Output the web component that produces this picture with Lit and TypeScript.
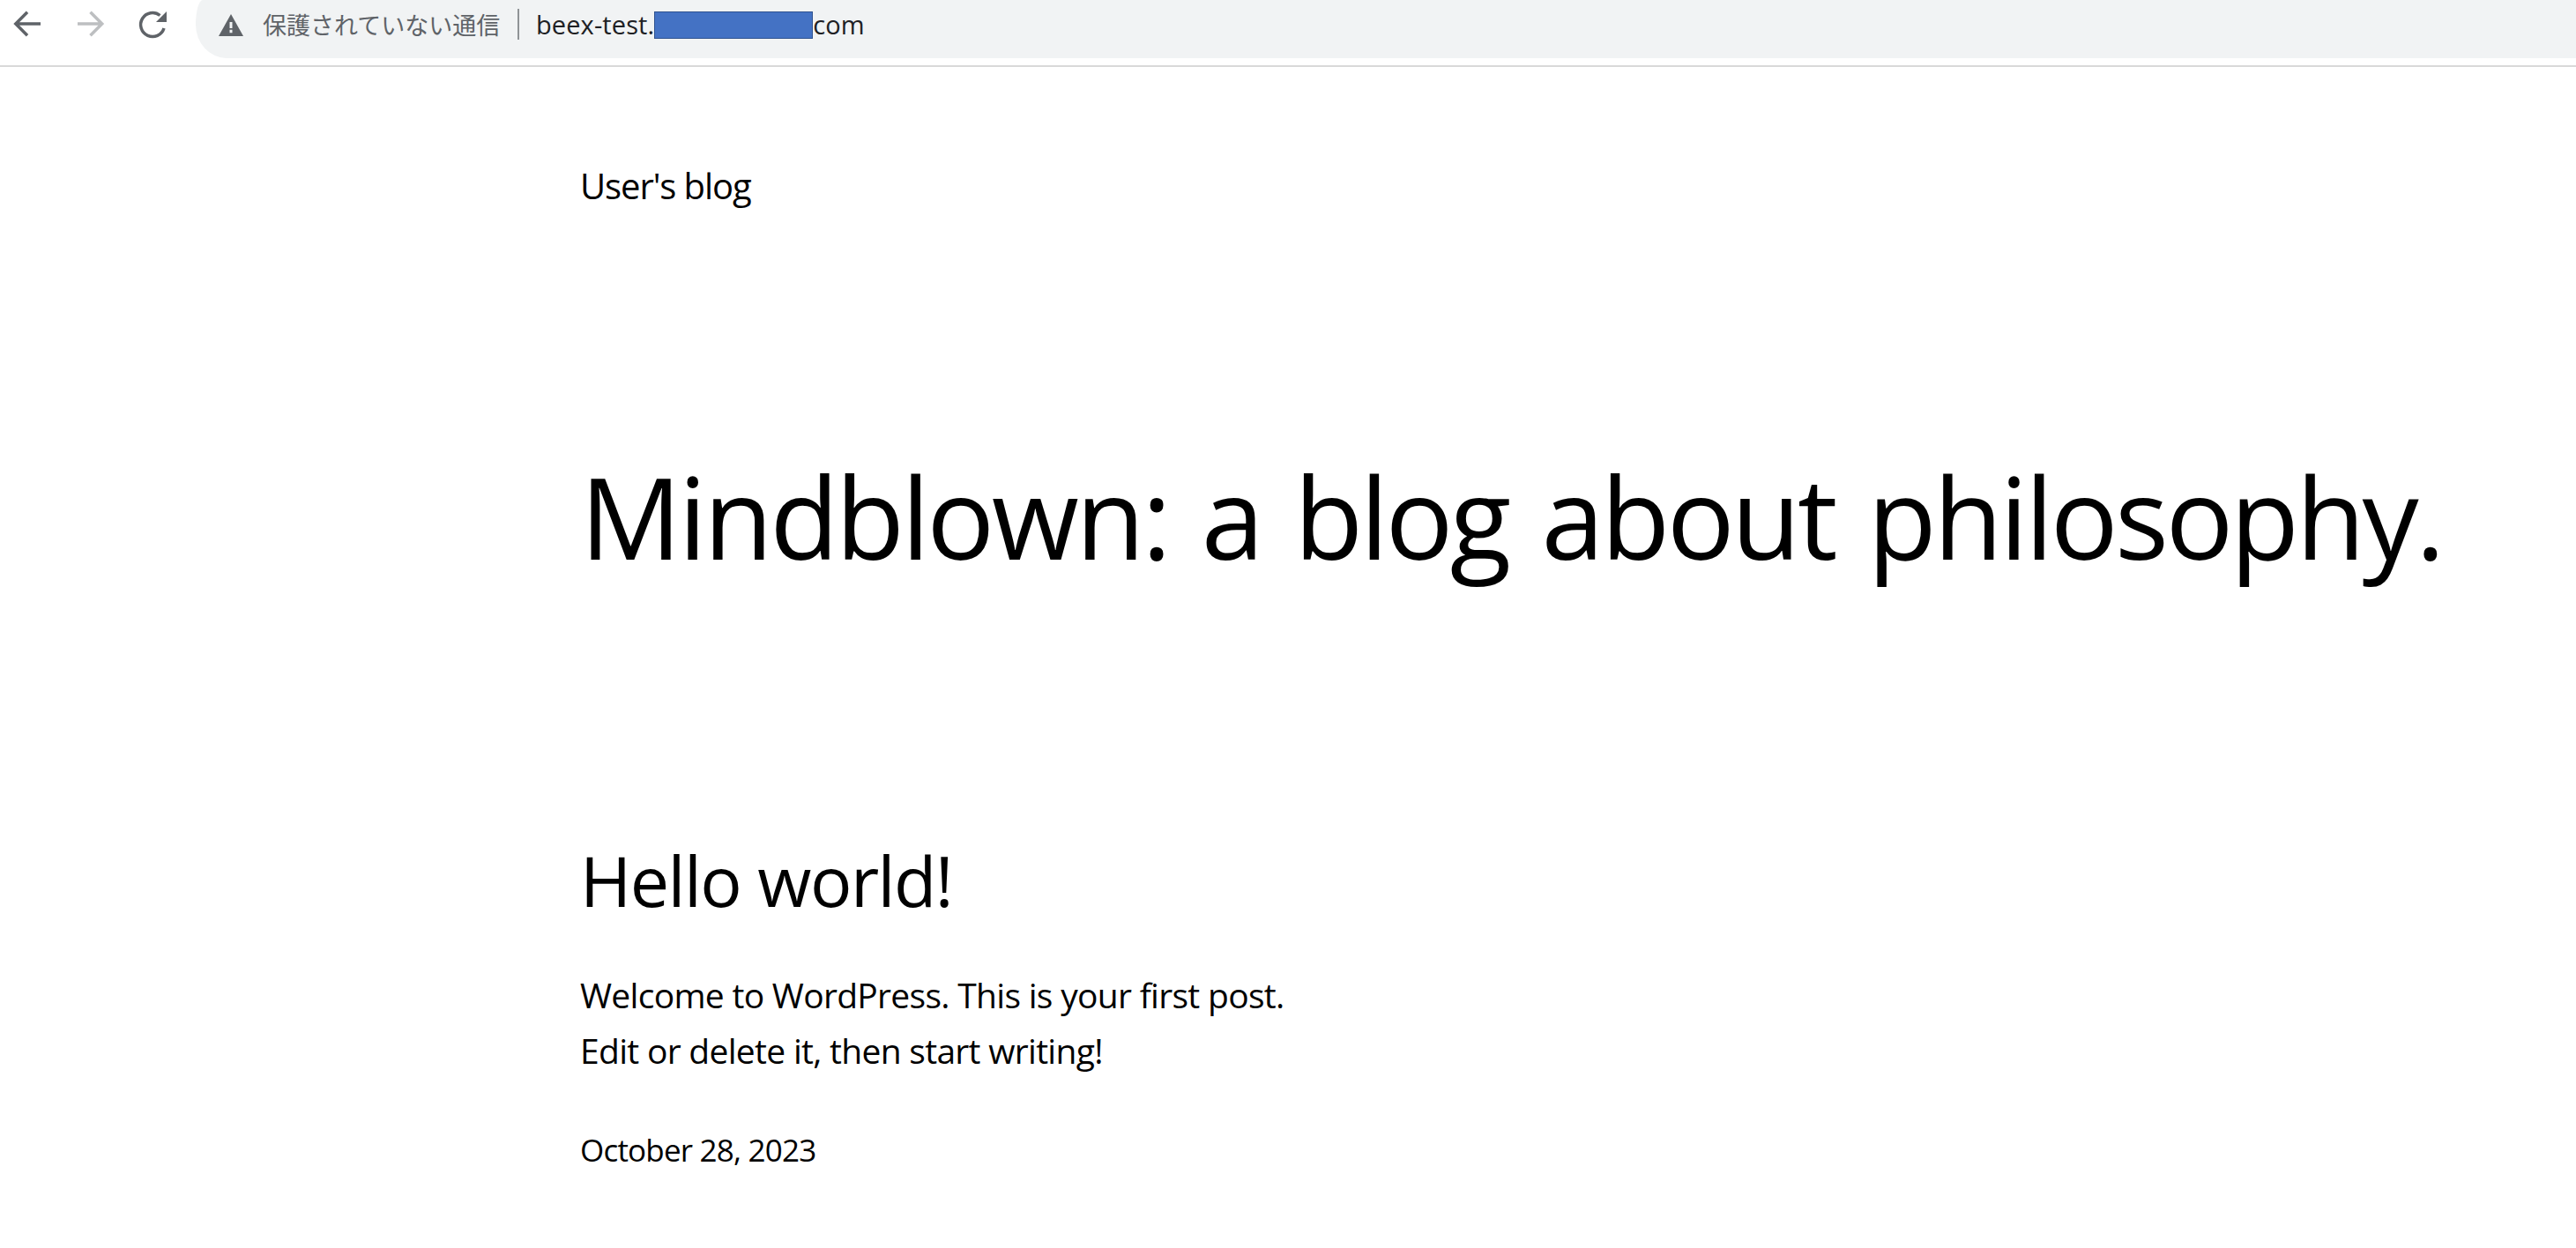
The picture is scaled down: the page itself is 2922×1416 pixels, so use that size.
import { LitElement, html, css } from "lit";
import { customElement } from "lit/decorators.js";

@customElement("app-root")
export class AppRoot extends LitElement {
  static styles = css`
    :host { display: block; background: #fff; min-height: 1416px; color: #000; font-family: "Open Sans", "Noto Sans", sans-serif; overflow: hidden; }
    .chrome { height: 74px; border-bottom: 2px solid #d9d9d9; display: flex; align-items: flex-start; }
    .nav { display: flex; width: 222px; flex: none; padding: 9px 0 0 13px; box-sizing: border-box; gap: 35px; }
    .nav svg { display: block; flex: none; }
    .omni { flex: 1; height: 66px; background: #f1f3f4; border-radius: 8px 0 0 35px / 28px 0 0 38px; display: flex; align-items: flex-start; }
    .warn { margin: 15px 0 0 25px; flex: none; }
    .insecure { margin: 8px 0 0 21px; font: 400 27px/40px "Noto Sans CJK JP", sans-serif; color: #5f6368; white-space: nowrap; width: 268px; }
    .sep { margin: 10px 0 0 21px; width: 2px; height: 35px; background: #8f9396; flex: none; }
    .url { margin: 8px 0 0 19px; display: flex; font: 400 29px/40px "Open Sans", sans-serif; letter-spacing: .1px; color: #202124; white-space: nowrap; }
    .redact { width: 180px; height: 31px; margin-top: 5px; background: #4472c4; border: 1px solid #2f528f; box-sizing: border-box; flex: none; }
    .page { padding: 110px 0 0 658px; }
    .site { margin: 0; font-size: 40px; line-height: 50px; letter-spacing: -1.1px; }
    .title { margin: 255px 0 0; font-size: 128px; line-height: 190px; font-weight: 400; letter-spacing: -3.6px; word-spacing: 8px; white-space: nowrap; }
    .post { margin: 268px 0 0; font-size: 79px; line-height: 100px; font-weight: 400; letter-spacing: -1.55px; }
    .body { margin: 48px 0 0; font-size: 39px; line-height: 63px; letter-spacing: -.7px; }
    .date { margin: 57px 0 0; font-size: 35px; line-height: 50px; letter-spacing: -.8px; }
  `;

  render() {
    return html`
      <header class="chrome">
        <div class="nav">
          <svg width="36" height="36" viewBox="0 0 36 36" fill="none" stroke="#5f6368" stroke-width="3.5"><path d="M33 18H6.5M18 4.8 4.8 18 18 31.2"/></svg>
          <svg width="36" height="36" viewBox="0 0 36 36" fill="none" stroke="#bdbfc1" stroke-width="3.5"><path d="M4 18H30.500M18.500 4.800 31.700 18 18.500 31.200"/></svg>
          <svg width="36" height="38" viewBox="0 0 36 38"><path d="M26.500 8.500A13.500 13.500 0 1 0 31 23" fill="none" stroke="#5f6368" stroke-width="3.500"/><path d="M34 4V16H22z" fill="#5f6368"/></svg>
        </div>
        <div class="omni">
          <svg class="warn" width="30" height="27" viewBox="0 0 30 27"><path d="M15 1 29 26H1z M13.500 10v7h3V10z M13.500 18.800v3.400h3v-3.400z" fill="#5f6368" fill-rule="evenodd"/></svg>
          <span class="insecure">保護されていない通信</span>
          <span class="sep"></span>
          <div class="url"><span>beex-test.</span><span class="redact"></span><span>com</span></div>
        </div>
      </header>
      <main class="page">
        <p class="site">User's blog</p>
        <h1 class="title">Mindblown: a blog about philosophy.</h1>
        <h2 class="post">Hello world!</h2>
        <p class="body">Welcome to WordPress. This is your first post.<br>Edit or delete it, then start writing!</p>
        <p class="date">October 28, 2023</p>
      </main>
    `;
  }
}
